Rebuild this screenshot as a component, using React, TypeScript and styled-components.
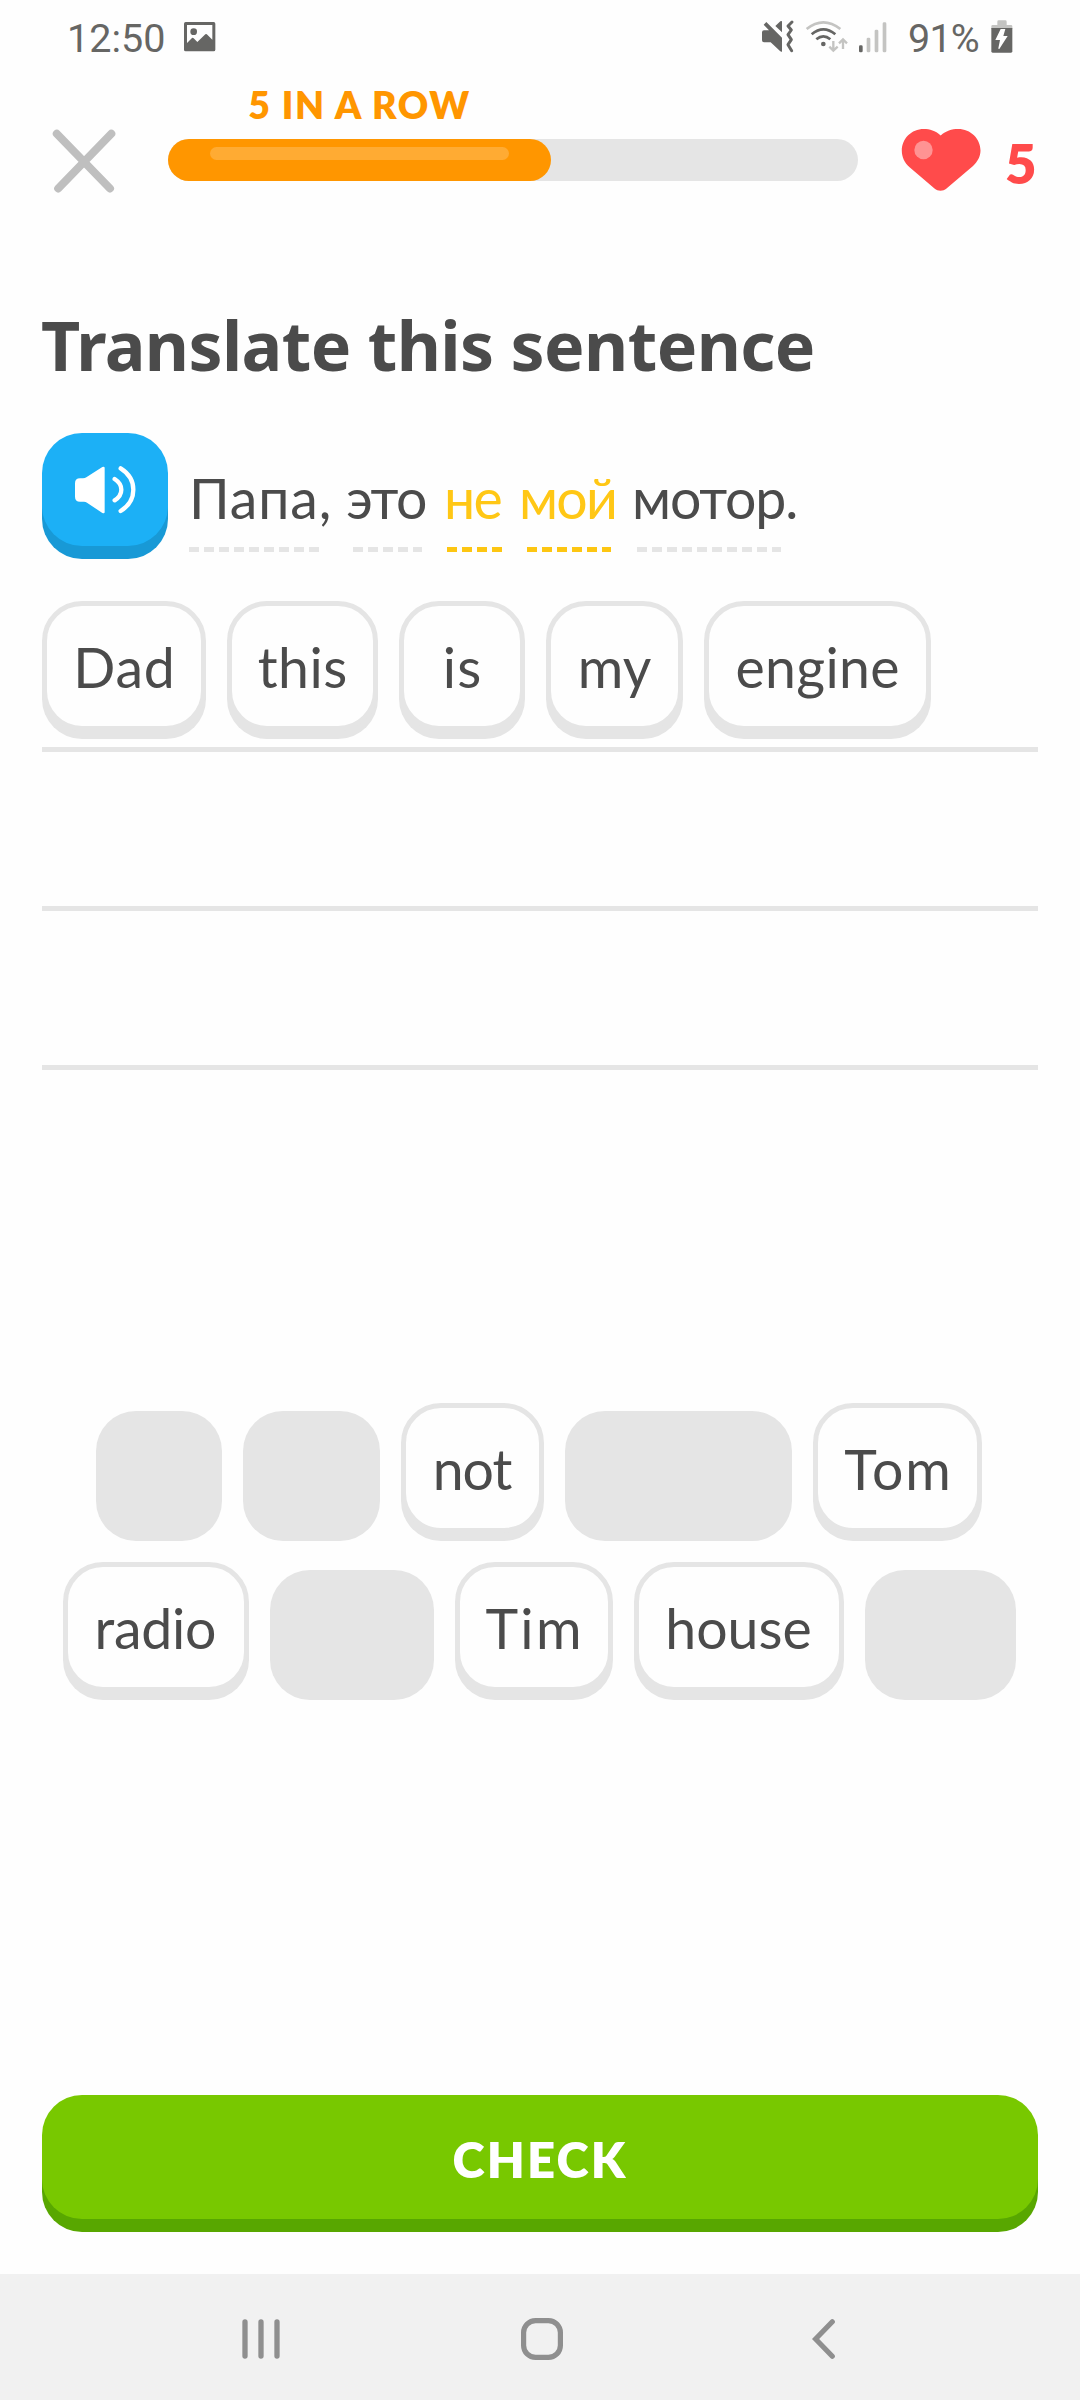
import React from "react";
import styled, { createGlobalStyle } from "styled-components";

const GlobalStyle = createGlobalStyle`
  *, *::before, *::after { box-sizing: border-box; }
  body {
    margin: 0;
    background: #fefefe;
    color: #4b4b4b;
    font-family: Lato, "Noto Sans", sans-serif;
  }
  svg { display: block; flex: none; }
`;

const Screen = styled.div`
  width: 1080px;
  height: 2400px;
  display: flex;
  flex-direction: column;
  background: #fefefe;
  overflow: hidden;
`;

/* ---------- status bar ---------- */
const StatusBar = styled.header`
  height: 77px;
  flex: none;
  display: flex;
  justify-content: space-between;
  padding: 0 67px 0 67px;
  font: 400 39.5px/77px Roboto, sans-serif;
  color: #666664;
`;
const StatusGroup = styled.div`
  display: flex;
  align-items: flex-start;
`;
const StatusIcon = styled.svg<{ $left?: number }>`
  margin: 19px 0 0 ${(p) => p.$left ?? 0}px;
`;
const Battery = styled.span`
  width: 75px;
  margin-left: 19px;
  letter-spacing: -0.8px;
`;

/* ---------- lesson header ---------- */
const LessonHeader = styled.div`
  height: 134px;
  flex: none;
  display: flex;
  align-items: flex-start;
  padding: 0 42px 0 52px;
`;
const CloseButton = styled.button`
  border: 0;
  padding: 0;
  margin-top: 51px;
  background: none;
`;
const ProgressColumn = styled.div`
  width: 690px;
  margin-left: 52px;
`;
const StreakLabel = styled.div`
  width: 383px;
  height: 62px;
  padding-top: 7px;
  text-align: center;
  font-size: 37.5px;
  line-height: 41px;
  font-weight: 800;
  letter-spacing: 1.6px;
  color: #ff9600;
`;
const Track = styled.div`
  height: 42px;
  border-radius: 21px;
  background: #e5e5e5;
`;
const Fill = styled.div`
  width: 383px;
  height: 42px;
  padding: 8px 42px 0;
  border-radius: 21px;
  background: #ff9600;
`;
const Shine = styled.div`
  height: 13px;
  border-radius: 7px;
  background: #ffab33;
`;
const Hearts = styled.div`
  display: flex;
  margin-left: 43px;
  padding-top: 51px;
  color: #ff4b4b;
`;
const HeartCount = styled.span`
  margin: 2px 0 0 24px;
  font-size: 54.5px;
  line-height: 66px;
  font-weight: 800;
`;

/* ---------- prompt ---------- */
const Title = styled.h1`
  margin: 92px 0 0 41px;
  height: 83px;
  font-family: "Noto Sans", "Open Sans", sans-serif;
  font-size: 68px;
  line-height: 84px;
  font-weight: 700;
  letter-spacing: -0.6px;
  white-space: nowrap;
`;
const Prompt = styled.div`
  display: flex;
  margin: 47px 0 0 42px;
  height: 126px;
`;
const SoundButton = styled.button`
  width: 126px;
  height: 113px;
  border: 0;
  padding: 0;
  border-radius: 40px;
  background: #1cb0f6;
  box-shadow: 0 13px 0 #1899d6;
  display: flex;
  align-items: center;
  justify-content: center;
`;
const Sentence = styled.div`
  display: flex;
  margin-left: 21px;
  padding-top: 19px;
`;
const Token = styled.span<{ $width: number; $fresh?: boolean }>`
  width: ${(p) => p.$width}px;
  color: ${(p) => (p.$fresh ? "#ffc715" : "#4b4b4b")};
`;
const TokenText = styled.span<{ $spacing: number }>`
  display: block;
  height: 95px;
  font-size: 55.4px;
  line-height: 92px;
  letter-spacing: ${(p) => p.$spacing}px;
  white-space: nowrap;
`;
const TokenDashes = styled.span<{ $offset: number; $length: number; $fresh?: boolean }>`
  display: block;
  width: ${(p) => p.$length}px;
  height: 5px;
  margin-left: ${(p) => p.$offset}px;
  background: repeating-linear-gradient(
    90deg,
    ${(p) => (p.$fresh ? "#fdc612" : "#e5e5e5")} 0 10px,
    transparent 10px 15px
  );
`;

/* ---------- word chips ---------- */
const AnswerArea = styled.div`
  margin: 42px 42px 0;
  flex: none;
`;
const AnswerLine = styled.div`
  height: 159px;
  display: flex;
  align-items: flex-end;
  gap: 21px;
  padding-bottom: 8px;
  border-bottom: 5px solid #e5e5e5;
  &:first-child { height: 151px; }
`;
const Chip = styled.button<{ $width: number }>`
  width: ${(p) => p.$width}px;
  height: 130px;
  margin: 0 0 8px;
  padding: 2px 0 0;
  border: 5px solid #e5e5e5;
  border-radius: 40px;
  box-shadow: 0 8px 0 #e5e5e5;
  background: #fefefe;
  color: #4b4b4b;
  font: 400 55.4px/118px Lato, "Noto Sans", sans-serif;
  text-align: center;
`;
const ChipText = styled.span<{ $spacing: number }>`
  letter-spacing: ${(p) => p.$spacing}px;
  margin-right: ${(p) => -p.$spacing}px;
`;
const EmptySlot = styled.div<{ $width: number }>`
  width: ${(p) => p.$width}px;
  height: 130px;
  border-radius: 40px;
  background: #e5e5e5;
`;
const Bank = styled.div`
  flex: none;
  margin-top: 333px;
  display: flex;
  flex-direction: column;
  align-items: center;
  gap: 21px;
  padding-right: 2px;
`;
const BankRow = styled.div`
  height: 138px;
  display: flex;
  align-items: flex-end;
  gap: 21px;
`;

/* ---------- footer ---------- */
const CheckButton = styled.button`
  flex: none;
  width: 996px;
  height: 124px;
  margin: auto 42px 55px;
  padding: 4px 0 0;
  border: 0;
  border-radius: 40px;
  background: #78c800;
  box-shadow: 0 13px 0 #58a700;
  color: #fff;
  font: 800 49px/120px Lato, sans-serif;
  letter-spacing: 2.1px;
  text-align: center;
`;
const NavBar = styled.nav`
  flex: none;
  height: 126px;
  display: grid;
  grid-template-columns: 280px 291px 24px;
  align-items: center;
  padding: 4px 0 0 241px;
  background: #f1f1f1;
`;

type Word = { text: string; width: number; spacing?: number; used?: boolean };

const answer: Word[] = [
  { text: "Dad", width: 164, spacing: 0.8 },
  { text: "this", width: 151, spacing: 0.5 },
  { text: "is", width: 126, spacing: 1 },
  { text: "my", width: 137 },
  { text: "engine", width: 227, spacing: 0.3 },
];

const bank: Word[][] = [
  [
    { text: "is", width: 126, used: true },
    { text: "my", width: 137, used: true },
    { text: "not", width: 143, spacing: -1 },
    { text: "engine", width: 227, used: true },
    { text: "Tom", width: 169, spacing: 1.8 },
  ],
  [
    { text: "radio", width: 186, spacing: -0.3 },
    { text: "Dad", width: 164, used: true },
    { text: "Tim", width: 158, spacing: 2.4 },
    { text: "house", width: 210 },
    { text: "this", width: 151, used: true },
  ],
];

const sentence = [
  { text: "Папа,", width: 157, spacing: 0.9, offset: 0, length: 130 },
  { text: "это", width: 98, spacing: -1.2, offset: 7, length: 69 },
  { text: "не", width: 75, spacing: -1.6, offset: 3, length: 55, fresh: true },
  { text: "мой", width: 113, spacing: -1.8, offset: 8, length: 84, fresh: true },
  { text: "мотор.", width: 170, spacing: -1.1, offset: 5, length: 144 },
];

const WordChip = ({ word }: { word: Word }) =>
  word.used ? (
    <EmptySlot $width={word.width} />
  ) : (
    <Chip $width={word.width}>
      <ChipText $spacing={word.spacing ?? 0}>{word.text}</ChipText>
    </Chip>
  );

const PhotoIcon = () => (
  <StatusIcon $left={18} width="34" height="36" viewBox="430 57 102 108" fill="#666664">
    <path
      fillRule="evenodd"
      d="M438 66H522Q527 66 527 71V149Q527 154 522 154H438Q433 154 433 149V71Q433 66 438 66ZM442 75V129L457 114Q459 112 462 115L473 126L497 103Q500 101 503 104L518 119V75Z"
    />
    <circle cx="462" cy="95" r="10" />
  </StatusIcon>
);

const MuteIcon = () => (
  <StatusIcon width="35" height="36" viewBox="63 57 105 108">
    <path
      d="M66 97q0-6 6-6h15L71 74l8-8 47 47v42q-3 1-6-2L92 127H72q-6 0-6-6zM106 78l15-14q5-3 5 1v32z"
      fill="#666664"
    />
    <path
      d="M156 66L144 78 154 90 144 104 154 119 144 134 155 152"
      fill="none"
      stroke="#666664"
      strokeWidth="9"
      strokeLinejoin="round"
      strokeLinecap="round"
    />
  </StatusIcon>
);

const WifiIcon = () => (
  <StatusIcon $left={9} width="44" height="36" viewBox="195 57 132 108" fill="none" strokeWidth="8">
    <path d="M200 87Q250 47 301 87" stroke="#c4c4c2" />
    <path d="M215 103Q250 73 286 103" stroke="#666664" />
    <path d="M229 118Q250 100 271 118" stroke="#666664" />
    <circle cx="250" cy="132" r="7" fill="#666664" />
    <g stroke="#c4c4c2" strokeWidth="7">
      <path d="M280 123V150M268 140L280 152 293 140" />
      <path d="M309 147V120M297 130L309 118 321 130" />
    </g>
  </StatusIcon>
);

const SignalIcon = () => (
  <StatusIcon $left={8} width="32" height="36" viewBox="351 57 96 108" fill="#c4c4c2">
    <rect x="357" y="136" width="11" height="21" rx="4" fill="#666664" />
    <rect x="380" y="113" width="11" height="44" rx="4" />
    <rect x="404" y="89" width="11" height="68" rx="4" />
    <rect x="428" y="67" width="11" height="90" rx="4" />
  </StatusIcon>
);

const BatteryIcon = () => (
  <StatusIcon $left={8} width="22" height="36" viewBox="755 57 66 108">
    <path d="M774 65q0-4 4-4h20q4 0 4 4v10h13q4 0 4 4v8H756v-8q0-4 4-4h14z" fill="#c4c4c2" />
    <path d="M756 84h63v70q0 4-4 4h-55q-4 0-4-4z" fill="#666664" />
    <path d="M784 87h14l-6 21h13l-25 39q-3 1-3-2l5-25h-14z" fill="#fefefe" />
  </StatusIcon>
);

const CloseIcon = () => (
  <svg width="64" height="66" viewBox="0 0 64 66" stroke="#bfbfbf" strokeWidth="8" strokeLinecap="round">
    <path d="M4.8 5.7L58 60.5M59.3 5.7L6.2 60.5" />
  </svg>
);

const HeartIcon = () => (
  <svg width="80" height="64" viewBox="0 0 80 64">
    <path
      d="M39.7 7.4C34 2.600 29 1 22.700 1 10.500 1 .8 10.600.8 22.600c0 6.400 2.700 12.400 7.800 16.700l24.900 21.300c3.600 3 8.400 3 12 0L72 38c4.800-4.500 7.500-9.700 7.500-15.400C79.500 10.600 69.500 1 57.300 1 50.500 1 45 2.900 39.700 7.400z"
      fill="#ff4b4b"
    />
    <circle cx="22.500" cy="22" r="9.200" fill="#ff9393" />
  </svg>
);

const SpeakerIcon = () => (
  <svg width="63" height="49" viewBox="100 107 189 147">
    <path
      d="M103 162q0-15 15-15h9q6 0 10-3l48-31q7-3 7 3v132q0 6-7 3l-46-31q-4-3-9-3h-12q-15 0-15-15z"
      fill="#fff"
    />
    <path
      d="M222 149q20 13 20 32t-20 32M240 117q38 24 38 64t-38 64"
      fill="none"
      stroke="#fff"
      strokeWidth="13"
      strokeLinecap="round"
    />
  </svg>
);

const RecentsIcon = () => (
  <svg width="40" height="42" viewBox="0 0 40 42" stroke="#8f8f8f" strokeWidth="5.300" strokeLinecap="round">
    <path d="M4 4V38M20 4V38M36 4V38" />
  </svg>
);

const HomeIcon = () => (
  <svg width="42" height="42" viewBox="0 0 42 42">
    <rect x="2.600" y="2.600" width="36.800" height="36.800" rx="12" fill="none" stroke="#8f8f8f" strokeWidth="5.200" />
  </svg>
);

const BackIcon = () => (
  <svg width="24" height="42" viewBox="0 0 24 42">
    <path d="M20.300 3.800L3.600 21 20.300 38.200" fill="none" stroke="#8f8f8f" strokeWidth="5.200" strokeLinecap="round" />
  </svg>
);

export default function App() {
  return (
    <Screen>
      <GlobalStyle />
      <StatusBar>
        <StatusGroup>
          12:50
          <PhotoIcon />
        </StatusGroup>
        <StatusGroup>
          <MuteIcon />
          <WifiIcon />
          <SignalIcon />
          <Battery>91%</Battery>
          <BatteryIcon />
        </StatusGroup>
      </StatusBar>

      <LessonHeader>
        <CloseButton aria-label="Close">
          <CloseIcon />
        </CloseButton>
        <ProgressColumn>
          <StreakLabel>5 IN A ROW</StreakLabel>
          <Track>
            <Fill>
              <Shine />
            </Fill>
          </Track>
        </ProgressColumn>
        <Hearts>
          <HeartIcon />
          <HeartCount>5</HeartCount>
        </Hearts>
      </LessonHeader>

      <Title>Translate this sentence</Title>

      <Prompt>
        <SoundButton aria-label="Listen">
          <SpeakerIcon />
        </SoundButton>
        <Sentence>
          {sentence.map((t) => (
            <Token key={t.text} $width={t.width} $fresh={t.fresh}>
              <TokenText $spacing={t.spacing}>{t.text}</TokenText>
              <TokenDashes $offset={t.offset} $length={t.length} $fresh={t.fresh} />
            </Token>
          ))}
        </Sentence>
      </Prompt>

      <AnswerArea>
        <AnswerLine>
          {answer.map((w) => (
            <WordChip key={w.text} word={w} />
          ))}
        </AnswerLine>
        <AnswerLine />
        <AnswerLine />
      </AnswerArea>

      <Bank>
        {bank.map((row, i) => (
          <BankRow key={i}>
            {row.map((w) => (
              <WordChip key={w.text} word={w} />
            ))}
          </BankRow>
        ))}
      </Bank>

      <CheckButton>CHECK</CheckButton>

      <NavBar>
        <RecentsIcon />
        <HomeIcon />
        <BackIcon />
      </NavBar>
    </Screen>
  );
}
